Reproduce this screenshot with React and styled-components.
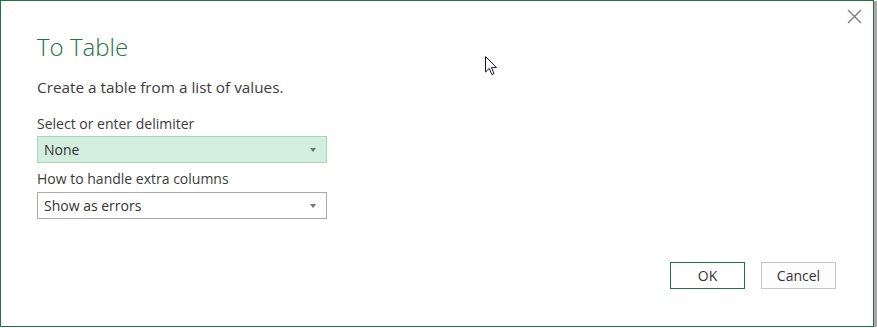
import React from "react";
import styled, { createGlobalStyle } from "styled-components";

const Global = createGlobalStyle`
  html, body { margin: 0; padding: 0; background: #ffffff; }
  body { font-family: "Segoe UI", "Open Sans", "Noto Sans", sans-serif; }
  * { box-sizing: border-box; }
`;

const Dialog = styled.div`
  position: relative;
  width: 874px;
  height: 327px;
  border: 1px solid #217346;
  background: #ffffff;
  box-shadow: 3px 1px 0 #a8a8a8;
  display: flex;
  flex-direction: column;
  padding: 30px 37px 37px 36px;
`;

const CloseButton = styled.button`
  position: absolute;
  top: 7px;
  right: 11px;
  width: 16px;
  height: 16px;
  padding: 0;
  border: none;
  background: transparent;
  display: flex;
  align-items: center;
  justify-content: center;
  cursor: pointer;
`;

const Title = styled.h1`
  margin: 0;
  font-family: "Segoe UI", "Open Sans", sans-serif;
  font-weight: 300;
  font-size: 24px;
  line-height: 32px;
  color: #217346;
`;

const Description = styled.p`
  margin: 14px 0 0 0;
  font-size: 15.3px;
  line-height: 20px;
  color: #3b3b3b;
`;

const Label = styled.div`
  margin-top: ${(p) => p.$gap}px;
  font-size: 14px;
  line-height: 20px;
  color: #3b3b3b;
`;

const Select = styled.div`
  margin-top: ${(p) => p.$gap}px;
  width: 290px;
  height: 27px;
  display: flex;
  align-items: center;
  justify-content: space-between;
  padding: 0 10px 0 6px;
  font-size: 14px;
  color: #333333;
  background: ${(p) => (p.$active ? "#d3eedf" : "#ffffff")};
  border: 1px solid ${(p) => (p.$active ? "#a4dabb" : "#ababab")};
`;

const Arrow = styled.span`
  width: 0;
  height: 0;
  border-left: 3.5px solid transparent;
  border-right: 3.5px solid transparent;
  border-top: 4px solid #707070;
`;

const Footer = styled.div`
  margin-top: auto;
  display: flex;
  justify-content: flex-end;
  gap: 16px;
`;

const Button = styled.button`
  width: 75px;
  height: 27px;
  font-family: "Segoe UI", "Open Sans", sans-serif;
  font-size: 14px;
  color: #333333;
  background: ${(p) => (p.$primary ? "#ffffff" : "#fdfdfd")};
  border: 1px solid ${(p) => (p.$primary ? "#217346" : "#c6c6c6")};
  padding: 0;
  cursor: pointer;
`;

const Cursor = styled.svg`
  position: absolute;
  left: 485px;
  top: 56px;
  pointer-events: none;
`;

export default function App() {
  return (
    <>
      <Global />
      <Dialog>
        <CloseButton aria-label="Close">
          <svg width="15" height="15" viewBox="0 0 15 15">
            <path d="M1 1 L14 14 M14 1 L1 14" stroke="#7d7d7d" strokeWidth="1.4" fill="none" />
          </svg>
        </CloseButton>
        <Title>To Table</Title>
        <Description>Create a table from a list of values.</Description>
        <Label $gap={17}>Select or enter delimiter</Label>
        <Select $gap={2} $active>
          <span>None</span>
          <Arrow />
        </Select>
        <Label $gap={6}>How to handle extra columns</Label>
        <Select $gap={3}>
          <span>Show as errors</span>
          <Arrow />
        </Select>
        <Footer>
          <Button $primary>OK</Button>
          <Button>Cancel</Button>
        </Footer>
      </Dialog>
      <Cursor width="13" height="20" viewBox="0 0 13 20">
        <path
          d="M0.5 0.5 L0.5 16 L4.2 12.4 L6.8 18.5 L9 17.6 L6.5 11.6 L11.5 11.6 Z"
          fill="#ffffff"
          stroke="#1a1a2e"
          strokeWidth="1"
          strokeLinejoin="miter"
        />
      </Cursor>
    </>
  );
}
